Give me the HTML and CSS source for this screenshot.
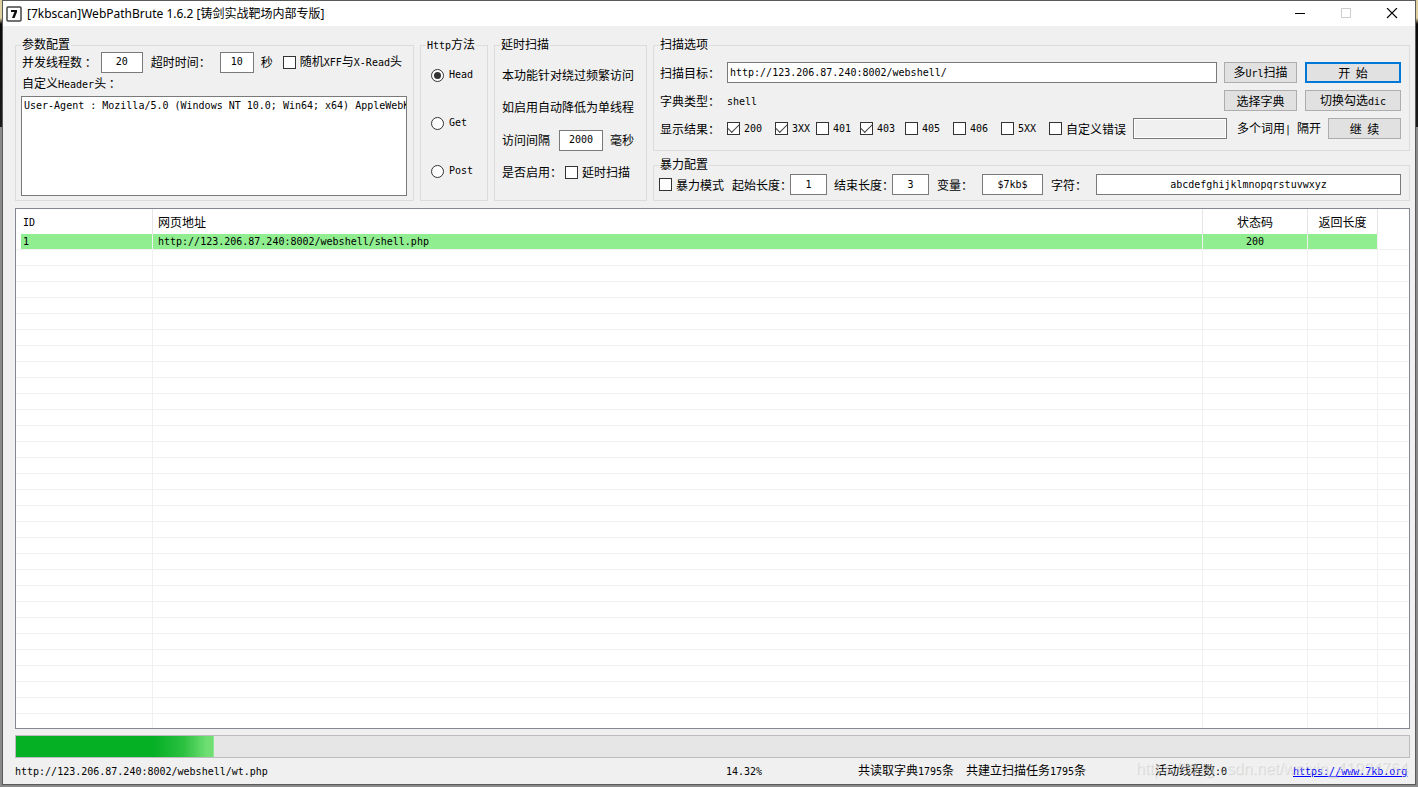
FILE: index.html
```
<!DOCTYPE html>
<html lang="zh-CN">
<head>
<meta charset="utf-8">
<title>[7kbscan]WebPathBrute 1.6.2</title>
<link rel="stylesheet" href="styles.css">
</head>
<body>
<div class="window">
  <header class="titlebar">
    <svg class="app-icon" width="16" height="16" viewBox="0 0 16 16" aria-hidden="true">
      <rect x="1" y="1" width="14" height="14" rx="1" fill="#fff" stroke="#444" stroke-width="1.5"/>
      <path d="M5 4H11V6L8.6 12H6L8.4 6H5Z" fill="#111"/>
    </svg>
    <h1 class="title">[7kbscan]WebPathBrute 1.6.2 [铸剑实战靶场内部专版]</h1>
    <button class="win-btn" type="button" aria-label="最小化"><svg width="12" height="12" viewBox="0 0 12 12"><path d="M1 5.5H11" stroke="#000" fill="none"/></svg></button>
    <button class="win-btn" type="button" aria-label="最大化" disabled><svg width="12" height="12" viewBox="0 0 12 12"><path d="M1.5 0.5H10.5V9.5H1.5Z" stroke="#ccc" fill="none"/></svg></button>
    <button class="win-btn" type="button" aria-label="关闭"><svg width="12" height="12" viewBox="0 0 12 12"><path d="M1 0L11 10M11 0L1 10" stroke="#000" stroke-width="1.1" fill="none"/></svg></button>
  </header>

  <main class="panel">
    <form class="groups">
      <fieldset class="group params">
        <legend>参数配置</legend>
        <div class="params-row">
          <label for="threads">并发线程数 ：</label>
          <input class="field center threads" id="threads" type="text" value="20">
          <label class="timeout-label" for="timeout">超时时间：</label>
          <input class="field center timeout" id="timeout" type="text" value="10">
          <span class="unit">秒</span>
          <label class="option"><input type="checkbox"><span>随机<span class="en">XFF</span>与<span class="en">X-Read</span>头</span></label>
        </div>
        <label class="params-row" for="headers"><span>自定义<span class="en">Header</span>头 ：</span></label>
        <textarea class="field headers" id="headers">User-Agent : Mozilla/5.0 (Windows NT 10.0; Win64; x64) AppleWebKit/537.36</textarea>
      </fieldset>

      <fieldset class="group methods">
        <legend><span class="en">Http</span>方法</legend>
        <label class="option"><input type="radio" name="method" checked><span class="en">Head</span></label>
        <label class="option"><input type="radio" name="method"><span class="en">Get</span></label>
        <label class="option"><input type="radio" name="method"><span class="en">Post</span></label>
      </fieldset>

      <fieldset class="group delay">
        <legend>延时扫描</legend>
        <p class="line">本功能针对绕过频繁访问</p>
        <p class="line">如启用自动降低为单线程</p>
        <div class="line interval"><label for="interval">访问间隔</label><input class="field center" id="interval" type="text" value="2000"><span>毫秒</span></div>
        <div class="line enable"><span class="enable-label">是否启用：</span><label class="option"><input type="checkbox">延时扫描</label></div>
      </fieldset>

      <div class="right">
        <fieldset class="group scan">
          <legend>扫描选项</legend>
          <div class="scan-row">
            <label class="caption" for="target">扫描目标：</label>
            <input class="field grow" id="target" type="text" value="http://123.206.87.240:8002/webshell/">
            <button class="btn" type="button">多<span class="en">Url</span>扫描</button>
            <button class="btn wide primary" type="button">开&nbsp; 始</button>
          </div>
          <div class="scan-row">
            <span class="caption">字典类型：</span>
            <span class="grow"><span class="en">shell</span></span>
            <button class="btn" type="button">选择字典</button>
            <button class="btn wide" type="button">切换勾选<span class="en">dic</span></button>
          </div>
          <div class="scan-row">
            <span class="caption">显示结果：</span>
            <div class="codes">
              <label class="option"><input type="checkbox" checked><span class="en">200</span></label>
              <label class="option"><input type="checkbox" checked><span class="en">3XX</span></label>
              <label class="option"><input type="checkbox"><span class="en">401</span></label>
              <label class="option"><input type="checkbox" checked><span class="en">403</span></label>
              <label class="option"><input type="checkbox"><span class="en">405</span></label>
              <label class="option"><input type="checkbox"><span class="en">406</span></label>
              <label class="option"><input type="checkbox"><span class="en">5XX</span></label>
              <label class="option"><input type="checkbox">自定义错误</label>
            </div>
            <input class="field grow custom-error" type="text" aria-label="自定义错误" disabled>
            <span class="hint">多个词用<span class="en">| </span>隔开</span>
            <button class="btn" type="button">继&nbsp; 续</button>
          </div>
        </fieldset>

        <fieldset class="group brute">
          <legend>暴力配置</legend>
          <div class="brute-row">
            <label class="option"><input type="checkbox">暴力模式</label>
            <label class="length-label" for="start">起始长度：</label>
            <input class="field center length" id="start" type="text" value="1">
            <label class="length-label" for="end">结束长度：</label>
            <input class="field center length" id="end" type="text" value="3">
            <label class="short-label" for="variable">变量：</label>
            <input class="field center variable" id="variable" type="text" value="$7kb$">
            <label class="short-label" for="chars">字符：</label>
            <input class="field center grow" id="chars" type="text" value="abcdefghijklmnopqrstuvwxyz">
          </div>
        </fieldset>
      </div>
    </form>

    <section class="results">
      <table>
        <colgroup><col class="col-id"><col><col class="col-status"><col class="col-length"><col class="col-rest"></colgroup>
        <thead>
          <tr><th><span class="en">ID</span></th><th>网页地址</th><th class="mid">状态码</th><th class="mid">返回长度</th><th></th></tr>
        </thead>
        <tbody>
          <tr class="hit en"><td>1</td><td>http://123.206.87.240:8002/webshell/shell.php</td><td class="mid">200</td><td></td><td></td></tr>
          <tr class="blank"><td></td><td></td><td></td><td></td><td></td></tr>
        </tbody>
      </table>
    </section>

    <div class="progress" role="progressbar" aria-label="扫描进度" aria-valuenow="14.32" aria-valuemin="0" aria-valuemax="100"><div class="bar" style="width:14.2%"></div></div>

    <footer class="status">
      <span><span class="en">http://123.206.87.240:8002/webshell/wt.php</span></span>
      <span><span class="en">14.32%</span></span>
      <span>共读取字典<span class="en">1795</span>条</span>
      <span>共建立扫描任务<span class="en">1795</span>条</span>
      <span>活动线程数<span class="en">:0</span></span>
      <span><a class="en" href="https://www.7kb.org">https://www.7kb.org</a></span>
      <span class="watermark">https://blog.csdn.net/weixin_41924764</span>
    </footer>
  </main>
</div>
</body>
</html>
```
FILE: styles.css
```
* { box-sizing: border-box; }

body {
  margin: 0;
  height: 100vh;
  display: flex;
  padding: 0 2px 2px;
  background: linear-gradient(#e0d0a0 18px, #0a0a0a 24px, #1c1c1c 127px, #8a8a8a 127px);
  color: #000;
  font: 12px/16px "Noto Sans CJK SC", sans-serif;
}

input, textarea, button { font: inherit; color: inherit; margin: 0; }
p { margin: 0; }
.grow { flex: 1; min-width: 0; }

.en, .field { font-family: "DejaVu Sans Mono", monospace; font-size: 10px; }

.window {
  flex: 1;
  min-width: 0;
  display: flex;
  flex-direction: column;
  border: 1px solid #5a5a5a;
  background: #f0f0f0;
}

.titlebar {
  display: flex;
  align-items: center;
  height: 25px;
  padding-left: 3px;
  background: #fff;
}
.title {
  flex: 1;
  margin: 0 0 0 5px;
  font: 12px/16px "Noto Sans", "Noto Sans CJK SC", sans-serif;
}
.win-btn {
  display: grid;
  place-items: center;
  width: 46px;
  height: 24px;
  padding: 0;
  border: 0;
  background: none;
}

.panel {
  flex: 1;
  min-height: 0;
  display: flex;
  flex-direction: column;
  padding: 13px 5px 0 12px;
}

.groups {
  display: grid;
  grid-template-columns: 399px 68px 153px 1fr;
  gap: 6px;
  height: 162px;
}
.group {
  min-width: 0;
  margin: 0;
  padding: 0;
  border: 1px solid #dcdcdc;
}
legend {
  height: 12px;
  margin-left: 5px;
  padding: 0 1px;
  line-height: 10px;
  white-space: nowrap;
}

.field {
  height: 21px;
  padding: 0 2px 1px;
  border: 1px solid #7a7a7a;
  border-radius: 0;
  background: #fff;
  outline: 0;
}
.field:disabled { background: #f0f0f0; box-shadow: inset 0 0 0 1px #fff; }
.center { text-align: center; }

.option {
  display: flex;
  align-items: center;
  gap: 4px;
  white-space: nowrap;
}
.option input {
  appearance: none;
  flex: none;
  display: grid;
  place-items: center;
  width: 13px;
  height: 13px;
  border: 1px solid #333;
  background: #fff;
}
.option input[type="radio"] { border-radius: 50%; }
.option input[type="radio"]:checked::before {
  content: "";
  width: 7px;
  height: 7px;
  border-radius: 50%;
  background: #333;
}
.option input[type="checkbox"]:checked::before {
  content: "";
  width: 10px;
  height: 5px;
  margin-bottom: 3px;
  border: solid #444;
  border-width: 0 0 1px 1px;
  transform: rotate(-45deg);
}

.params-row {
  display: flex;
  align-items: center;
  height: 22px;
  padding-left: 6px;
  white-space: pre;
}
.threads { width: 42px; margin-left: 4px; }
.timeout-label { margin-left: 8px; }
.timeout { width: 34px; margin-left: 9px; }
.unit { margin: 0 10px 0 7px; }
.headers {
  display: block;
  width: calc(100% - 11px);
  height: 100px;
  margin: 1px 5px 4px;
  line-height: 17px;
  white-space: pre;
  overflow: hidden;
  resize: none;
}

.methods .option { height: 48px; padding-left: 10px; gap: 5px; }

.line {
  display: flex;
  align-items: center;
  height: 32px;
  padding-left: 7px;
  white-space: nowrap;
}
.delay legend + .line { margin-top: 8px; }
.line.interval { height: 34px; }
.line.enable { height: 30px; }
.interval input { width: 44px; margin: 0 7px 0 9px; }
.enable-label { width: 63px; }

.right { display: flex; flex-direction: column; gap: 8px; min-width: 0; }
.scan { height: 112px; }
.brute { height: 42px; }
.scan-row {
  display: flex;
  align-items: center;
  height: 21px;
  margin-bottom: 7px;
  padding: 0 8px 0 6px;
}
legend + .scan-row { margin-top: 11px; }
.caption { width: 67px; }
.btn {
  width: 73px;
  height: 21px;
  margin-left: 7px;
  padding: 0;
  border: 1px solid #adadad;
  background: #e1e1e1;
  line-height: 17px;
  white-space: nowrap;
}
.btn.wide { width: 96px; margin-left: 8px; }
.btn.primary { border: 2px solid #0078d7; line-height: 15px; }
.codes {
  display: grid;
  grid-template-columns: 48px 41px 44px 45px 48px 48px 48px auto;
  margin-right: 7px;
}
.hint { margin-left: 10px; white-space: pre; }

.brute-row {
  display: flex;
  align-items: center;
  margin-top: 3px;
  padding: 0 8px 0 5px;
}
.length-label { width: 58px; margin-left: 7px; white-space: nowrap; }
.option + .length-label { margin-left: 8px; }
.short-label { width: 45px; margin-left: 8px; white-space: nowrap; }
.length { width: 37px; }
.variable { width: 61px; }

.results {
  flex: 1;
  min-height: 0;
  margin-top: 7px;
  border: 1px solid #828790;
  background: #fff;
}
table {
  width: 100%;
  height: 100%;
  table-layout: fixed;
  border-collapse: separate;
  border-spacing: 0;
}
.col-id { width: 137px; }
.col-status { width: 105px; }
.col-length { width: 70px; }
.col-rest { width: 31px; }
th, td {
  padding: 0 0 0 5px;
  border-right: 1px solid #f0f0f0;
  text-align: left;
  font-weight: 400;
  overflow: hidden;
  white-space: nowrap;
}
th { height: 25px; border-color: #e5e5e5; }
th:first-child, td:first-child { padding-left: 7px; }
th:last-child, td:last-child { border-right: 0; }
th.mid, td.mid { padding: 0; text-align: center; }
.hit td {
  height: 16px;
  padding-top: 1px;
  border-bottom: 1px solid #f0f0f0;
  background: #90ee90;
  line-height: 14px;
}
.hit td:first-child { background: linear-gradient(to right, #fff 5px, #90ee90 5px); }
.hit td:last-child { background: #fff; }
.blank td {
  height: 100%;
  background: repeating-linear-gradient(#fff 0 15px, #f0f0f0 15px 16px);
}

.progress {
  height: 23px;
  margin-top: 6px;
  border: 1px solid #bcbcbc;
  background: #e6e6e6;
}
.bar {
  height: 100%;
  border-right: 1px solid #8fe78f;
  background: linear-gradient(to right, #06b025 70%, #2bc040 85%, #6fdf74 97%);
}

.status {
  position: relative;
  display: grid;
  grid-template-columns: 711fr 132fr 108fr 189fr 138fr 117fr;
  align-items: center;
  height: 26px;
  white-space: nowrap;
}
.status a { color: #00f; }
.watermark {
  position: absolute;
  right: 2px;
  top: 1px;
  color: rgba(255, 255, 255, 0.4);
  font: 16px/20px "Liberation Sans", sans-serif;
  text-shadow: 1px 1px 1px rgba(0, 0, 0, 0.12);
  pointer-events: none;
}
```
